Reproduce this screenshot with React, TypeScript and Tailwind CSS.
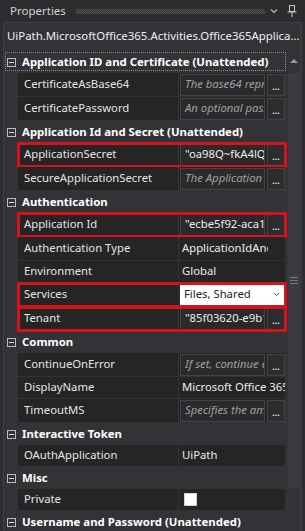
import React from 'react';

const Category = ({ title, focused }: { title: string; focused?: boolean }) => (
  <div className="relative flex h-[22px] items-center pl-[3px]">
    {focused && (
      <div className="absolute left-[1px] right-[1px] top-[1px] bottom-[2px] border border-dotted border-[#8a8a8a]" />
    )}
    <div className="flex h-[9px] w-[9px] items-center justify-center border border-[#bdbdbd]">
      <div className="h-px w-[5px] bg-[#e0e0e0]" />
    </div>
    <span className="ml-[6px] text-[11.4px] font-bold text-white whitespace-nowrap">{title}</span>
  </div>
);

const Prop = ({
  name,
  tall,
  marked,
  children,
}: {
  name: string;
  tall?: boolean;
  marked?: boolean;
  children?: React.ReactNode;
}) => (
  <div className={tall ? 'h-[24px] pb-px pl-[14px] pr-[2px]' : 'h-[22px] pb-px pl-[14px] pr-[2px]'}>
    <div className="relative flex h-full">
      <div className="flex w-[160px] items-center bg-[#252526] pl-[6px] text-[11.3px] text-[#e4e4e4] whitespace-nowrap">
        {name}
      </div>
      <div className="ml-px flex min-w-0 flex-1 items-center bg-[#252526]">{children}</div>
      {marked && (
        <div className="absolute -left-[1px] -right-[2px] -top-[1px] -bottom-[2px] border-[3px] border-[#d6131c]" />
      )}
    </div>
  </div>
);

const TextBox = ({ text, hint }: { text: string; hint?: boolean }) => (
  <div className="flex h-full w-full items-center gap-[2px] pl-px">
    <div
      className={
        hint
          ? 'flex h-[22px] w-[85px] items-center overflow-hidden whitespace-nowrap border border-[#434346] bg-[#2a2a2c] pl-[4px] text-[11.3px] italic text-[#a0a0a0]'
          : 'flex h-[22px] w-[85px] items-center overflow-hidden whitespace-nowrap border border-[#434346] bg-[#2a2a2c] pl-[4px] text-[11.3px] text-[#ececec]'
      }
    >
      {text}
    </div>
    <div className="flex h-[22px] w-[18px] items-end justify-center border border-[#434346] bg-[#2d2d30] pb-[4px] text-[9px] font-bold leading-none text-[#e0e0e0]">
      ...
    </div>
  </div>
);

const Plain = ({ text, narrow }: { text: string; narrow?: boolean }) => (
  <div
    className={
      narrow
        ? 'mr-[17px] overflow-hidden whitespace-nowrap pl-[3px] text-[11.3px] text-[#ececec]'
        : 'overflow-hidden whitespace-nowrap pl-[3px] text-[11.3px] text-[#ececec]'
    }
  >
    {text}
  </div>
);

const App = () => {
  return (
    <div className="h-[531px] w-[305px] overflow-hidden bg-[#2d2d30] font-['Noto_Sans',sans-serif]">
      {/* title bar */}
      <div className="flex h-[22px] items-center pl-[10px] pr-[8px]">
        <span className="text-[11.5px] text-[#d0d0d0]">Properties</span>
        <div className="ml-[10px] h-[5px] flex-1 bg-[repeating-conic-gradient(#58585c_0%_25%,transparent_0%_50%)] bg-[length:2px_2px]" />
        <svg width="10" height="10" viewBox="0 0 10 10" className="ml-[4px]">
          <path d="M2 3.5 L5 6.5 L8 3.5" fill="none" stroke="#bdbdbd" strokeWidth="1.2" />
        </svg>
        <svg width="10" height="14" viewBox="0 0 10 14" className="ml-[8px]">
          <rect x="2.5" y="1.5" width="5" height="6" fill="none" stroke="#c8c8c8" strokeWidth="1" />
          <line x1="0.5" y1="8" x2="9.5" y2="8" stroke="#c8c8c8" strokeWidth="1" />
          <line x1="5" y1="8" x2="5" y2="13" stroke="#c8c8c8" strokeWidth="1" />
        </svg>
      </div>

      <div className="ml-[3px] mr-[3px] border-x border-t border-[#3f3f46] bg-[#333337]">
        {/* path */}
        <div className="flex h-[28px] items-center overflow-hidden whitespace-nowrap pl-[3px] pb-[2px] text-[11.4px] text-[#f0f0f0]">
          UiPath.MicrosoftOffice365.Activities.Office365Applica...
        </div>

        <div className="flex">
          <div className="min-w-0 flex-1">
            <Category title="Application ID and Certificate (Unattended)" focused />
            <Prop name="CertificateAsBase64" tall>
              <TextBox text="The base64 representation" hint />
            </Prop>
            <Prop name="CertificatePassword" tall>
              <TextBox text="An optional password" hint />
            </Prop>

            <Category title="Application Id and Secret (Unattended)" />
            <Prop name="ApplicationSecret" tall marked>
              <TextBox text={'"oa98Q~fkA4lQ'} />
            </Prop>
            <Prop name="SecureApplicationSecret" tall>
              <TextBox text="The Application secret" hint />
            </Prop>

            <Category title="Authentication" />
            <Prop name="Application Id" tall marked>
              <TextBox text={'"ecbe5f92-aca1'} />
            </Prop>
            <Prop name="Authentication Type" tall>
              <Plain text="ApplicationIdAndSecret" narrow />
            </Prop>
            <Prop name="Environment">
              <Plain text="Global" />
            </Prop>
            <Prop name="Services" tall marked>
              <div className="flex h-full w-full items-center py-[1px] pl-px">
                <div className="flex h-full w-full items-center justify-between bg-white pl-[4px] pr-[5px] text-[11.3px] text-[#1e1e1e]">
                  <span>Files, Shared</span>
                  <svg width="7" height="5" viewBox="0 0 7 5">
                    <path d="M1 1 L3.5 3.5 L6 1" fill="none" stroke="#555" strokeWidth="1" />
                  </svg>
                </div>
              </div>
            </Prop>
            <Prop name="Tenant" tall marked>
              <TextBox text={'"85f03620-e9b1'} />
            </Prop>

            <Category title="Common" />
            <Prop name="ContinueOnError" tall>
              <TextBox text="If set, continue execution" hint />
            </Prop>
            <Prop name="DisplayName">
              <Plain text="Microsoft Office 365 Scope" />
            </Prop>
            <Prop name="TimeoutMS" tall>
              <TextBox text="Specifies the amount" hint />
            </Prop>

            <Category title="Interactive Token" />
            <Prop name="OAuthApplication">
              <Plain text="UiPath" />
            </Prop>

            <Category title="Misc" />
            <Prop name="Private">
              <div className="ml-[5px] h-[13px] w-[13px] border border-[#d0d0d0] bg-white" />
            </Prop>

            <Category title="Username and Password (Unattended)" />
            <Prop name="" tall>
              <TextBox text="" hint />
            </Prop>
          </div>

          {/* scrollbar */}
          <div className="relative w-[14px] shrink-0 bg-[#333337]">
            <div className="flex h-[20px] items-center justify-center">
              <div className="h-0 w-0 border-x-[4px] border-b-[4px] border-x-transparent border-b-[#9a9a9a]" />
            </div>
            <div className="ml-px mr-px mt-[2px] flex h-[415px] flex-col items-center justify-center gap-[2px] bg-[#3c3c40]">
              <div className="h-px w-[8px] bg-[#7c7c80]" />
              <div className="h-px w-[8px] bg-[#7c7c80]" />
              <div className="h-px w-[8px] bg-[#7c7c80]" />
            </div>
          </div>
        </div>
      </div>
    </div>
  );
};

export default App;
